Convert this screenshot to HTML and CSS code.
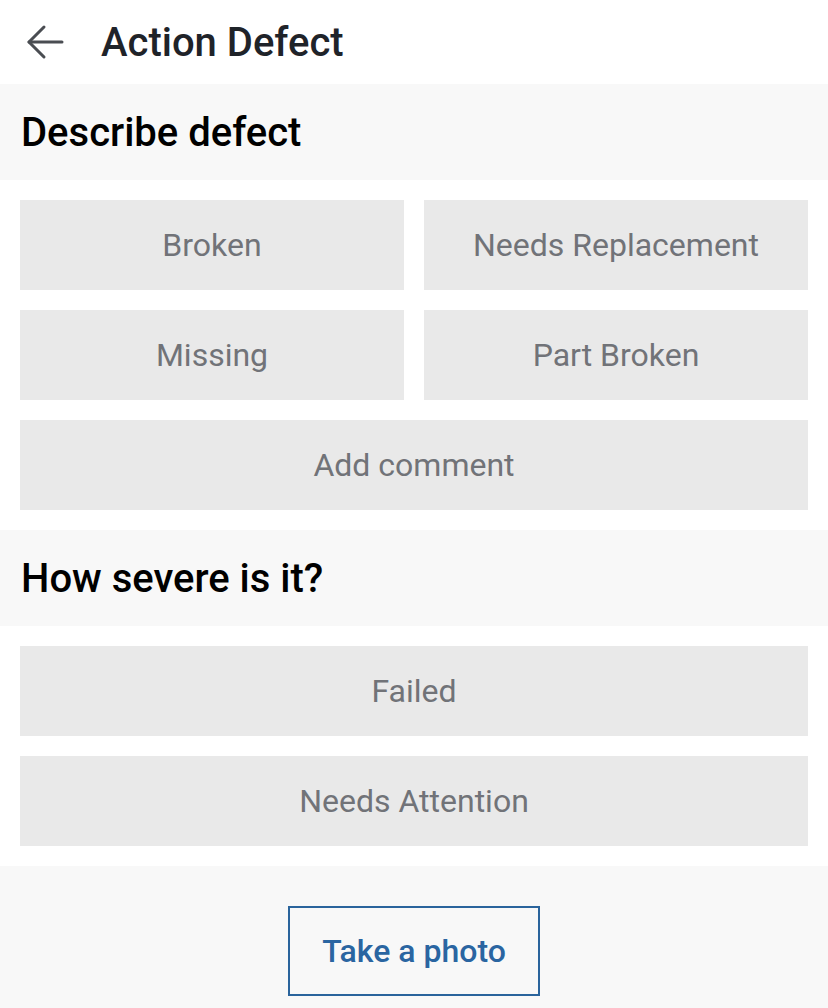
FILE: index.html
```html
<!DOCTYPE html>
<html lang="en">
<head>
  <meta charset="UTF-8" />
  <meta name="viewport" content="width=device-width, initial-scale=1.0"/>
  <title>Action Defect</title>
  <link rel="stylesheet" href="styles.css">
</head>
<body>

<!-- Top bar -->
<header class="topbar">
  <button class="back-btn" aria-label="Back">
    <svg width="40" height="40" viewBox="0 0 40 40" fill="none" stroke="#4a4d52" stroke-width="3" stroke-linecap="round" stroke-linejoin="round">
      <path d="M37 20H4"/>
      <path d="M19 5L4 20l15 15"/>
    </svg>
  </button>
  <h1>Action Defect</h1>
</header>

<!-- Describe defect -->
<h2 class="section-title">Describe defect</h2>
<div class="options grid-2">
  <button class="option">Broken</button>
  <button class="option">Needs Replacement</button>
  <button class="option">Missing</button>
  <button class="option">Part Broken</button>
  <button class="option wide">Add comment</button>
</div>

<!-- Severity -->
<h2 class="section-title">How severe is it?</h2>
<div class="options">
  <button class="option">Failed</button>
  <button class="option">Needs Attention</button>
</div>

<!-- Footer -->
<div class="footer">
  <button class="photo-btn">Take a photo</button>
</div>

</body>
</html>
```

FILE: styles.css
```css
* {
  box-sizing: border-box;
  font-family: Roboto, 'Noto Sans', sans-serif;
}
body {
  margin: 0;
  background: #fff;
  min-height: 1008px;
  display: flex;
  flex-direction: column;
}

.topbar {
  height: 84px;
  display: flex;
  align-items: center;
  padding-left: 25px;
}
.back-btn {
  background: none;
  border: none;
  padding: 0;
  width: 40px;
  height: 40px;
  margin-right: 36px;
  cursor: pointer;
}
.topbar h1 {
  margin: 0;
  font-size: 40px;
  font-weight: 500;
  color: #1f2329;
}

.section-title {
  margin: 0;
  height: 96px;
  display: flex;
  align-items: center;
  padding-left: 21px;
  background: #f8f8f8;
  font-size: 40px;
  font-weight: 500;
  color: #000;
}

.options {
  display: grid;
  gap: 20px;
  padding: 20px;
}
.options.grid-2 {
  grid-template-columns: 1fr 1fr;
}
.option {
  height: 90px;
  border: none;
  background: #e9e9e9;
  color: #717378;
  font-size: 32px;
  cursor: pointer;
}
.option.wide {
  grid-column: span 2;
}

.footer {
  flex: 1;
  background: #f8f8f8;
  display: flex;
  justify-content: center;
  padding-top: 40px;
}
.photo-btn {
  width: 252px;
  height: 90px;
  background: transparent;
  border: 2px solid #2a649c;
  color: #2a65a1;
  font-size: 32px;
  font-weight: 500;
  cursor: pointer;
}
```
